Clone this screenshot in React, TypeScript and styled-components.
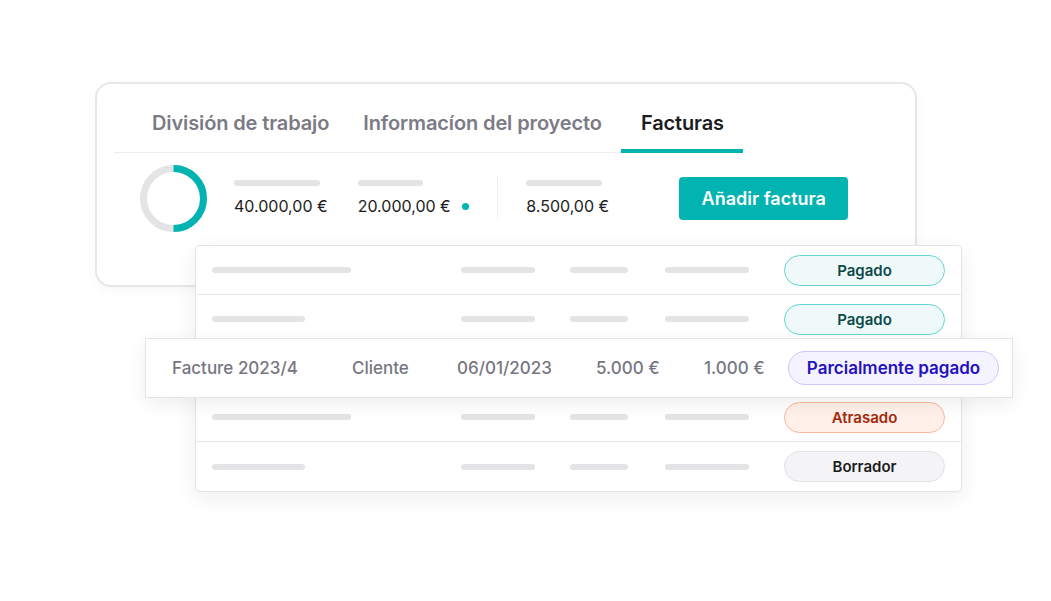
import React from 'react';
import styled, { createGlobalStyle } from 'styled-components';

const teal = '#01b3b1';

const GlobalStyle = createGlobalStyle`
  html, body {
    margin: 0;
    padding: 0;
    background: #ffffff;
  }
  body {
    font-family: Inter, "Noto Sans", "Liberation Sans", sans-serif;
    -webkit-font-smoothing: antialiased;
  }
`;

const Page = styled.div`
  width: 1051px;
  height: 601px;
  padding: 82px 0 0 95px;
  box-sizing: border-box;
  display: flex;
  flex-direction: column;
  overflow: hidden;
`;

const Card = styled.div`
  width: 822px;
  height: 205px;
  box-sizing: border-box;
  border: 2px solid #e7e7e9;
  border-radius: 16px;
  background: #fff;
  padding: 0 17px;
  box-shadow: 0 4px 14px rgba(0, 0, 0, 0.03);
`;

const TabBar = styled.div`
  display: inline-flex;
  padding-left: 21px;
  border-bottom: 1.5px solid #ececee;
`;

const Tab = styled.div<{ $active?: boolean }>`
  padding: ${(p) => (p.$active ? '27px 19.5px 14px' : '27px 17px 14px')};
  margin-left: ${(p) => (p.$active ? '2.5px' : '0')};
  font-size: 20px;
  line-height: 24px;
  font-weight: 600;
  letter-spacing: -0.12px;
  color: ${(p) => (p.$active ? '#1c1c21' : '#7b7a85')};
  border-bottom: 4px solid ${(p) => (p.$active ? teal : 'transparent')};
  margin-bottom: -1.5px;
  white-space: nowrap;
`;

const StatsRow = styled.div`
  display: flex;
  align-items: center;
  padding: 12px 0 0 26px;
`;

const Donut = styled.svg`
  width: 67px;
  height: 67px;
  flex: none;
  margin-right: 27px;
`;

const Stat = styled.div<{ $gap: number }>`
  display: flex;
  flex-direction: column;
  gap: 10px;
  margin-right: ${(p) => p.$gap}px;
`;

const Bar = styled.div<{ $w: number }>`
  width: ${(p) => p.$w}px;
  height: 6px;
  border-radius: 3px;
  background: #e4e4e7;
`;

const Value = styled.div`
  display: flex;
  align-items: center;
  gap: 11px;
  font-size: 16px;
  line-height: 20px;
  color: #1c1c21;
  white-space: nowrap;
`;

const Dot = styled.span`
  width: 7px;
  height: 7px;
  border-radius: 50%;
  background: ${teal};
`;

const Divider = styled.div`
  width: 1.5px;
  height: 42px;
  background: #efeff1;
  margin-right: 28px;
`;

const AddButton = styled.button`
  width: 169px;
  height: 43px;
  border: none;
  border-radius: 4px;
  background: ${teal};
  color: #fff;
  font-family: inherit;
  font-size: 18px;
  font-weight: 600;
  margin-left: 70px;
  cursor: pointer;
`;

const Table = styled.div`
  position: relative;
  margin: -42px 0 0 100px;
  width: 767px;
  box-sizing: border-box;
  border: 1.5px solid #e4e4e7;
  border-radius: 5px;
  background: #fff;
  box-shadow: 0 6px 22px rgba(0, 0, 0, 0.07);
`;

const Row = styled.div<{ $last?: boolean }>`
  height: 49px;
  box-sizing: border-box;
  display: grid;
  grid-template-columns: 249px 109px 95px 119px 161px;
  align-items: center;
  padding-left: 16px;
  border-bottom: ${(p) => (p.$last ? 'none' : '1px solid #e7e7ea')};
`;

const FocusRow = styled.div`
  position: relative;
  z-index: 1;
  height: 60px;
  margin: -6px -52px -5px -51px;
  box-sizing: border-box;
  display: grid;
  grid-template-columns: 180px 105px 139px 108px 84px auto;
  align-items: center;
  padding-left: 26px;
  background: #fff;
  border: 1.5px solid #e4e4e7;
  box-shadow: 0 6px 20px rgba(0, 0, 0, 0.07);
`;

const Cell = styled.span`
  font-size: 17px;
  font-weight: 500;
  color: #77767f;
  white-space: nowrap;
`;

type Tone = 'paid' | 'partial' | 'late' | 'draft';

const tones: Record<Tone, { border: string; bg: string; fg: string }> = {
  paid: { border: '#63d5d1', bg: '#eff9fa', fg: '#0b4a48' },
  partial: { border: '#cdc9fb', bg: '#f4f3ff', fg: '#2411c0' },
  late: { border: '#fdb69d', bg: '#fff0ea', fg: '#a4290b' },
  draft: { border: '#e2e2e6', bg: '#f4f4f7', fg: '#1c1c21' },
};

const Badge = styled.span<{ $tone: Tone; $wide?: boolean }>`
  display: flex;
  align-items: center;
  justify-content: center;
  box-sizing: border-box;
  width: ${(p) => (p.$wide ? '211px' : '161px')};
  height: ${(p) => (p.$wide ? '34px' : '31px')};
  border-radius: 999px;
  border: 1.5px solid ${(p) => tones[p.$tone].border};
  background: ${(p) => tones[p.$tone].bg};
  color: ${(p) => tones[p.$tone].fg};
  font-size: ${(p) => (p.$wide ? '17px' : '15px')};
  font-weight: 600;
  white-space: nowrap;
`;

const PlaceholderRow: React.FC<{ first: number; tone: Tone; label: string; last?: boolean }> = ({
  first,
  tone,
  label,
  last,
}) => (
  <Row $last={last}>
    <Bar $w={first} />
    <Bar $w={74} />
    <Bar $w={58} />
    <Bar $w={84} />
    <Badge $tone={tone}>{label}</Badge>
  </Row>
);

export default function App() {
  return (
    <>
      <GlobalStyle />
      <Page>
        <Card>
          <TabBar>
            <Tab>División de trabajo</Tab>
            <Tab>Informacíon del proyecto</Tab>
            <Tab $active>Facturas</Tab>
          </TabBar>
          <StatsRow>
            <Donut viewBox="0 0 67 67">
              <circle cx="33.5" cy="33.5" r="30" fill="none" stroke="#e4e4e7" strokeWidth="7" />
              <path d="M33.5 3.5 A30 30 0 0 1 33.5 63.5" fill="none" stroke={teal} strokeWidth="7" />
            </Donut>
            <Stat $gap={30}>
              <Bar $w={86} />
              <Value>40.000,00 €</Value>
            </Stat>
            <Stat $gap={28}>
              <Bar $w={65} />
              <Value>
                20.000,00 €<Dot />
              </Value>
            </Stat>
            <Divider />
            <Stat $gap={0}>
              <Bar $w={76} />
              <Value>8.500,00 €</Value>
            </Stat>
            <AddButton>Añadir factura</AddButton>
          </StatsRow>
        </Card>
        <Table>
          <PlaceholderRow first={139} tone="paid" label="Pagado" />
          <PlaceholderRow first={93} tone="paid" label="Pagado" />
          <FocusRow>
            <Cell>Facture 2023/4</Cell>
            <Cell>Cliente</Cell>
            <Cell>06/01/2023</Cell>
            <Cell>5.000 €</Cell>
            <Cell>1.000 €</Cell>
            <Badge $tone="partial" $wide>
              Parcialmente pagado
            </Badge>
          </FocusRow>
          <PlaceholderRow first={139} tone="late" label="Atrasado" />
          <PlaceholderRow first={93} tone="draft" label="Borrador" last />
        </Table>
      </Page>
    </>
  );
}
